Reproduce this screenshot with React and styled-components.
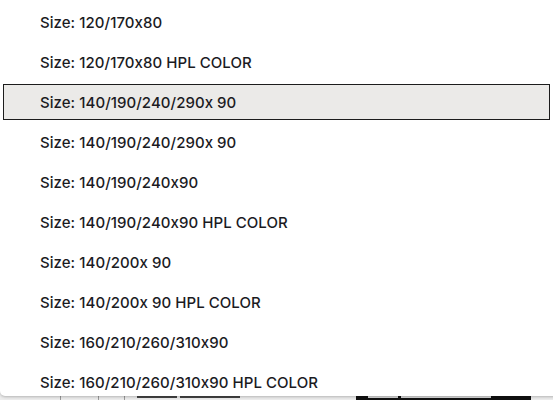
import React from "react";
import styled, { createGlobalStyle } from "styled-components";

const GlobalStyle = createGlobalStyle`
  html, body {
    margin: 0;
    padding: 0;
    background: #efefef;
    overflow: hidden;
  }
  body {
    font-family: Inter, "Noto Sans", "Liberation Sans", sans-serif;
  }
`;

const Page = styled.div`
  position: relative;
  width: 553px;
  height: 400px;
  overflow: hidden;
  display: flex;
  flex-direction: column;
  justify-content: flex-end;
`;

const BehindRow = styled.div`
  height: 4px;
  display: flex;
  align-items: stretch;
  overflow: hidden;
  background: #ededed;
`;

const Cell = styled.div`
  width: ${(p) => p.w}px;
  border-left: ${(p) => (p.line ? "1px solid #9a9a9a" : "none")};
  background: ${(p) => (p.dark ? "#111" : "transparent")};
  box-sizing: border-box;
  display: flex;
  align-items: flex-start;
  gap: 3px;
  padding-left: 12px;
`;

const Ink = styled.span`
  display: block;
  width: ${(p) => p.w}px;
  height: 2px;
  background: ${(p) => (p.light ? "#d8d8d8" : "#444")};
`;

const Menu = styled.div`
  position: absolute;
  top: 0;
  left: 0;
  width: 560px;
  height: 396px;
  background: #fff;
  border-radius: 0 0 5px 5px;
  box-shadow: 0 1px 3px rgba(0, 0, 0, 0.25);
  overflow: hidden;
`;

const List = styled.ul`
  list-style: none;
  margin: 0;
  padding: 4px 10px 0 3px;
  display: flex;
  flex-direction: column;
  gap: 4px;
`;

const Option = styled.li`
  height: 36px;
  width: 547px;
  box-sizing: border-box;
  display: flex;
  align-items: center;
  padding-left: 36px;
  border: 1px solid ${(p) => (p.selected ? "#1c1c1c" : "transparent")};
  background: ${(p) => (p.selected ? "#ebeae8" : "transparent")};
  color: #1b1b1f;
  font-size: 15px;
  font-weight: 500;
  letter-spacing: 0.05px;
  white-space: nowrap;
`;

const sizes = [
  "Size: 120/170x80",
  "Size: 120/170x80 HPL COLOR",
  "Size: 140/190/240/290x 90",
  "Size: 140/190/240/290x 90",
  "Size: 140/190/240x90",
  "Size: 140/190/240x90 HPL COLOR",
  "Size: 140/200x 90",
  "Size: 140/200x 90 HPL COLOR",
  "Size: 160/210/260/310x90",
  "Size: 160/210/260/310x90 HPL COLOR",
];

export default function App() {
  return (
    <Page>
      <GlobalStyle />
      <BehindRow>
        <Cell w={60} />
        <Cell w={38} line />
        <Cell w={26} line />
        <Cell w={232} line>
          <Ink w={40} />
          <Ink w={60} />
        </Cell>
        <Cell w={175} dark>
          <Ink w={30} light />
          <Ink w={90} light />
        </Cell>
        <Cell w={22} />
      </BehindRow>
      <Menu>
        <List>
          {sizes.map((s, i) => (
            <Option key={i} selected={i === 2}>
              {s}
            </Option>
          ))}
        </List>
      </Menu>
    </Page>
  );
}
